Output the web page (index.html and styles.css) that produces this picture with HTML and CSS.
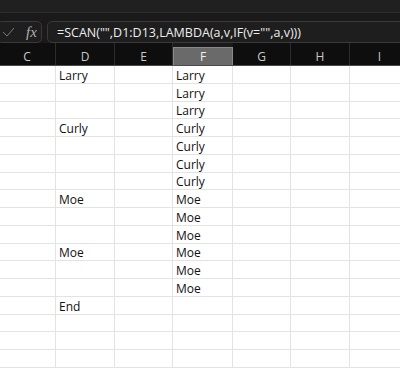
FILE: index.html
```html
<!DOCTYPE html>
<html lang="en">
<head>
    <meta charset="UTF-8">
    <title>SCAN</title>
    <link rel="stylesheet" href="styles.css">
</head>
<body>
    <div class="top-strip"></div>

    <div class="formula-bar">
        <div class="fx-box">
            <svg class="check" width="13" height="10" viewBox="0 0 13 10">
                <path d="M1 5 L5 9 L12 1" fill="none" stroke="#7a7a7a" stroke-width="1"/>
            </svg>
            <span class="fx">fx</span>
        </div>
        <div class="formula-input">=SCAN("",D1:D13,LAMBDA(a,v,IF(v="",a,v)))</div>
    </div>

    <div class="sheet">
        <div class="col-head">C</div>
        <div class="col-head">D</div>
        <div class="col-head">E</div>
        <div class="col-head active">F</div>
        <div class="col-head">G</div>
        <div class="col-head">H</div>
        <div class="col-head">I</div>
    </div>
    <div class="sheet" id="grid"></div>

    <script>
        const colD = ['Larry', '', '', 'Curly', '', '', '', 'Moe', '', '', 'Moe', '', '', 'End', '', '', ''];
        const colF = ['Larry', 'Larry', 'Larry', 'Curly', 'Curly', 'Curly', 'Curly', 'Moe', 'Moe', 'Moe', 'Moe', 'Moe', 'Moe', '', '', '', ''];
        const grid = document.getElementById('grid');

        for (let r = 0; r < colD.length; r++) {
            const row = ['', colD[r], '', colF[r], '', '', ''];
            row.forEach((txt, c) => {
                const cell = document.createElement('div');
                cell.className = 'cell';
                cell.textContent = txt;
                grid.appendChild(cell);
            });
        }
    </script>
</body>
</html>
```

FILE: styles.css
```css
body {
    margin: 0;
    width: 400px;
    height: 368px;
    overflow: hidden;
    background-color: #1a1a1a;
    font-family: "Open Sans", "Liberation Sans", sans-serif;
}

.top-strip {
    height: 12px;
    background-color: #202020;
    border-bottom: 1px solid #2e2e2e;
}

.formula-bar {
    display: flex;
    gap: 5px;
    height: 22px;
    padding-top: 8px;
}

.fx-box {
    display: flex;
    align-items: center;
    width: 45px;
    margin-left: -3px;
    box-sizing: border-box;
    border: 1px solid #3a3a3a;
    border-radius: 5px;
    background-color: #1e1e1e;
}

.check {
    margin-left: 4px;
}

.fx {
    margin-left: 11px;
    font-family: "Liberation Serif", serif;
    font-style: italic;
    font-size: 15px;
    color: #b0b0b0;
}

.formula-input {
    flex-grow: 1;
    display: flex;
    align-items: center;
    padding-left: 9px;
    margin-right: -10px;
    border: 1px solid #3a3a3a;
    border-radius: 5px;
    background-color: #1e1e1e;
    color: #ededed;
    font-size: 12.5px;
    white-space: nowrap;
}

.sheet {
    display: grid;
    grid-template-columns: 57px 59px 58px 60px 58px 59px 60px;
    margin-left: -1px;
}

.col-head {
    height: 22px;
    box-sizing: border-box;
    padding-bottom: 1px;
    display: flex;
    align-items: flex-end;
    justify-content: center;
    background-color: #0e0e0e;
    border-right: 1px solid #2c2c2c;
    color: #c9c9c9;
    font-size: 12px;
    line-height: 15px;
}

.col-head.active {
    margin-top: 4px;
    height: 18px;
    background-color: #6a6a6a;
    border: 1px solid #8a8a8a;
    border-bottom: none;
    color: #f0f0f0;
}

.sheet + .sheet {
    border-top: 1px solid #4a4a4a;
}

#grid {
    background-color: #ffffff;
}

.cell {
    box-sizing: border-box;
    height: 17.75px;
    padding: 0 0 0 3px;
    display: flex;
    align-items: flex-end;
    border-right: 1px solid #e3e3e3;
    border-bottom: 1px solid #e3e3e3;
    color: #111111;
    font-size: 12px;
    line-height: 15px;
}
```
